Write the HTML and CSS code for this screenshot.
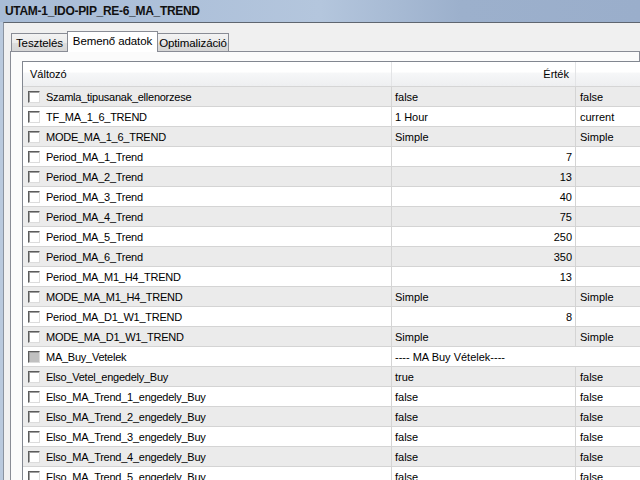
FILE: index.html
```html
<!DOCTYPE html>
<html lang="hu">
<head>
    <meta charset="UTF-8">
    <title>UTAM-1_IDO-PIP_RE-6_MA_TREND</title>
    <link rel="stylesheet" href="styles.css">
</head>
<body>

    <div class="window">
        <div class="titlebar">UTAM-1_IDO-PIP_RE-6_MA_TREND</div>

        <div class="frame">
            <div class="tabs">
                <div class="tab">Tesztelés</div>
                <div class="tab selected">Bemenő adatok</div>
                <div class="tab">Optimalizáció</div>
            </div>

            <div class="panel">
                <div class="list">
                    <div class="list-header">
                        <div class="hcell">Változó</div>
                        <div class="hcell right">Érték</div>
                        <div class="hcell"></div>
                    </div>

                    <div class="row odd">
                        <div class="cell name"><span class="check"></span>Szamla_tipusanak_ellenorzese</div>
                        <div class="cell">false</div>
                        <div class="cell last">false</div>
                    </div>
                    <div class="row">
                        <div class="cell name"><span class="check"></span>TF_MA_1_6_TREND</div>
                        <div class="cell">1 Hour</div>
                        <div class="cell last">current</div>
                    </div>
                    <div class="row odd">
                        <div class="cell name"><span class="check"></span>MODE_MA_1_6_TREND</div>
                        <div class="cell">Simple</div>
                        <div class="cell last">Simple</div>
                    </div>
                    <div class="row">
                        <div class="cell name"><span class="check"></span>Period_MA_1_Trend</div>
                        <div class="cell num">7</div>
                        <div class="cell last"></div>
                    </div>
                    <div class="row odd">
                        <div class="cell name"><span class="check"></span>Period_MA_2_Trend</div>
                        <div class="cell num">13</div>
                        <div class="cell last"></div>
                    </div>
                    <div class="row">
                        <div class="cell name"><span class="check"></span>Period_MA_3_Trend</div>
                        <div class="cell num">40</div>
                        <div class="cell last"></div>
                    </div>
                    <div class="row odd">
                        <div class="cell name"><span class="check"></span>Period_MA_4_Trend</div>
                        <div class="cell num">75</div>
                        <div class="cell last"></div>
                    </div>
                    <div class="row">
                        <div class="cell name"><span class="check"></span>Period_MA_5_Trend</div>
                        <div class="cell num">250</div>
                        <div class="cell last"></div>
                    </div>
                    <div class="row odd">
                        <div class="cell name"><span class="check"></span>Period_MA_6_Trend</div>
                        <div class="cell num">350</div>
                        <div class="cell last"></div>
                    </div>
                    <div class="row">
                        <div class="cell name"><span class="check"></span>Period_MA_M1_H4_TREND</div>
                        <div class="cell num">13</div>
                        <div class="cell last"></div>
                    </div>
                    <div class="row odd">
                        <div class="cell name"><span class="check"></span>MODE_MA_M1_H4_TREND</div>
                        <div class="cell">Simple</div>
                        <div class="cell last">Simple</div>
                    </div>
                    <div class="row">
                        <div class="cell name"><span class="check"></span>Period_MA_D1_W1_TREND</div>
                        <div class="cell num">8</div>
                        <div class="cell last"></div>
                    </div>
                    <div class="row odd">
                        <div class="cell name"><span class="check"></span>MODE_MA_D1_W1_TREND</div>
                        <div class="cell">Simple</div>
                        <div class="cell last">Simple</div>
                    </div>
                    <!-- separator line, no start value -->
                    <div class="row">
                        <div class="cell name"><span class="check disabled"></span>MA_Buy_Vetelek</div>
                        <div class="cell span">---- MA Buy Vételek----</div>
                    </div>
                    <div class="row odd">
                        <div class="cell name"><span class="check"></span>Elso_Vetel_engedely_Buy</div>
                        <div class="cell">true</div>
                        <div class="cell last">false</div>
                    </div>
                    <div class="row">
                        <div class="cell name"><span class="check"></span>Elso_MA_Trend_1_engedely_Buy</div>
                        <div class="cell">false</div>
                        <div class="cell last">false</div>
                    </div>
                    <div class="row odd">
                        <div class="cell name"><span class="check"></span>Elso_MA_Trend_2_engedely_Buy</div>
                        <div class="cell">false</div>
                        <div class="cell last">false</div>
                    </div>
                    <div class="row">
                        <div class="cell name"><span class="check"></span>Elso_MA_Trend_3_engedely_Buy</div>
                        <div class="cell">false</div>
                        <div class="cell last">false</div>
                    </div>
                    <div class="row odd">
                        <div class="cell name"><span class="check"></span>Elso_MA_Trend_4_engedely_Buy</div>
                        <div class="cell">false</div>
                        <div class="cell last">false</div>
                    </div>
                    <div class="row">
                        <div class="cell name"><span class="check"></span>Elso_MA_Trend_5_engedely_Buy</div>
                        <div class="cell">false</div>
                        <div class="cell last">false</div>
                    </div>
                </div>
            </div>
        </div>
    </div>

</body>
</html>
```

FILE: styles.css
```css
/* Strategy tester input dialog */
* {
    box-sizing: border-box;
}
body {
    margin: 0;
    padding: 0;
    width: 640px;
    height: 480px;
    overflow: hidden;
    font-family: "Liberation Sans", Arial, sans-serif;
    font-size: 11px;
    color: #000;
}
.window {
    display: flex;
    flex-direction: column;
    width: 640px;
    height: 480px;
    background: #b9c9dd;
}
.titlebar {
    height: 22px;
    flex-shrink: 0;
    padding: 4px 0 0 5px;
    font-size: 12px;
    font-weight: bold;
    letter-spacing: -0.3px;
    color: #111;
    background: linear-gradient(to right, #a8bcd6 0%, #aec1da 30%, #b4c6dd 50%, #9cb0cc 72%, #9aaecb 100%);
}
.frame {
    flex: 1;
    margin-left: 3px;
    border-top: 1px solid #5f6670;
    border-left: 1px solid #8a93a0;
    background: #f0f0f0;
    padding: 8px 0 0 6px;
    min-width: 0;
}

/* tabs */
.tabs {
    display: flex;
    align-items: flex-end;
    padding-left: 1px;
    height: 20px;
}
.tab {
    height: 18px;
    padding-top: 3px;
    text-align: center;
    font-size: 11.5px;
    letter-spacing: -0.1px;
    white-space: nowrap;
    border: 1px solid #898c95;
    border-bottom: none;
    background: linear-gradient(#f3f3f3, #ebebeb 50%, #dedede 51%, #d6d6d6);
    margin-left: -1px;
}
.tab:first-child {
    width: 57px;
    margin-left: 0;
}
.tab.selected {
    width: 91px;
    height: 21px;
    margin-bottom: -1px;
    padding-top: 3px;
    background: #fff;
    position: relative;
    z-index: 1;
}
.tab:last-child {
    width: 72px;
}
.panel {
    border: 1px solid #898c95;
    background: #fbfbfb;
    padding: 9px 0 0 11px;
    height: 460px;
}

/* property list */
.list {
    width: 700px;
    border-top: 1px solid #828790;
    border-left: 1px solid #828790;
    background: #fff;
}
.list-header {
    display: grid;
    grid-template-columns: 369px 184px 1fr;
    height: 25px;
    border-bottom: 1px solid #d5d5d5;
    background: linear-gradient(#fff 0%, #fff 42%, #f6f7f8 46%, #eeeff1 100%);
}
.hcell {
    padding: 6px 0 0 7px;
    border-right: 1px solid #e3e4e6;
}
.hcell.right {
    text-align: right;
    padding-right: 6px;
}
.row {
    display: grid;
    grid-template-columns: 369px 184px 1fr;
    height: 20px;
    border-bottom: 1px solid #d4d4d4;
    background: #fff;
}
.row.odd {
    background: #ebebeb;
}
.cell {
    display: flex;
    align-items: center;
    padding-left: 3px;
    border-right: 1px solid #d4d4d4;
    white-space: nowrap;
    overflow: hidden;
}
.cell.name {
    padding-left: 5px;
    letter-spacing: -0.25px;
}
.cell.num {
    justify-content: flex-end;
    padding-right: 3px;
}
.cell.last {
    padding-left: 4px;
    border-right: none;
}
.cell.span {
    grid-column: 2 / 4;
    border-right: none;
}
.check {
    width: 12px;
    height: 12px;
    margin-right: 6px;
    flex-shrink: 0;
    background: #fff;
    border-top: 1px solid #5c5c5c;
    border-left: 1px solid #5c5c5c;
    border-right: 1px solid #dcdcdc;
    border-bottom: 1px solid #dcdcdc;
    box-shadow: inset 1px 1px 0 #a0a0a0;
}
.check.disabled {
    background: #c0c0c0;
}
```
